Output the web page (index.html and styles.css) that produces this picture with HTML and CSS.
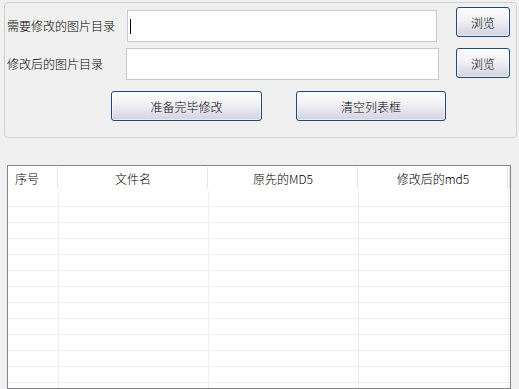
FILE: index.html
```html
<!DOCTYPE html>
<html lang="zh-CN">
<head>
    <meta charset="UTF-8">
    <meta name="viewport" content="width=device-width, initial-scale=1.0">
    <title>图片MD5修改</title>
    <link rel="stylesheet" href="styles.css">
</head>
<body>

<div class="group">
    <div class="row row-first">
        <div class="label">需要修改的图片目录</div>
        <div class="input"><span class="caret"></span></div>
        <button class="btn btn-browse">浏览</button>
    </div>
    <div class="row row-second">
        <div class="label label-short">修改后的图片目录</div>
        <div class="input input-wide"></div>
        <button class="btn btn-browse btn-browse2">浏览</button>
    </div>
    <div class="row row-actions">
        <button class="btn btn-action">准备完毕修改</button>
        <button class="btn btn-action btn-clear">清空列表框</button>
    </div>
</div>

<div class="list">
    <table class="list-table">
        <colgroup>
            <col style="width: 50px">
            <col style="width: 150px">
            <col style="width: 150px">
            <col style="width: 150px">
            <col>
        </colgroup>
        <thead>
            <tr>
                <th class="col-left">序号</th>
                <th>文件名</th>
                <th>原先的MD5</th>
                <th>修改后的md5</th>
                <th></th>
            </tr>
        </thead>
        <tbody id="rows"></tbody>
    </table>
</div>

<script>
    const rows = document.getElementById('rows');
    for (let i = 0; i < 13; i++) {
        const tr = document.createElement('tr');
        for (let j = 0; j < 5; j++) {
            tr.appendChild(document.createElement('td'));
        }
        rows.appendChild(tr);
    }
</script>

</body>
</html>
```

FILE: styles.css
```css
body {
    font-family: "Noto Sans CJK SC", "Liberation Sans", sans-serif;
    font-size: 12px;
    font-weight: 300;
    margin: 0;
    padding: 2px 0 0 4px;
    background-color: #f0f0f0;
    color: #000;
    overflow: hidden;
}

.group {
    box-sizing: border-box;
    width: 513px;
    height: 136px;
    border: 1px solid #d0d0d0;
    border-radius: 4px;
    padding: 0 0 0 2px;
}

.row {
    display: flex;
    align-items: flex-start;
}

.row-first {
    padding-top: 4px;
}

.row-second {
    margin-top: 6px;
}

.label {
    width: 120px;
    height: 32px;
    line-height: 32px;
    margin-top: 3px;
    white-space: nowrap;
}

.label-short {
    width: 119px;
    margin-top: 0;
}

.input {
    box-sizing: border-box;
    width: 310px;
    height: 32px;
    margin-top: 3px;
    border: 1px solid #c9c6d9;
    background-color: #fff;
    position: relative;
}

.input-wide {
    width: 313px;
    margin-top: 0;
}

.caret {
    position: absolute;
    left: 2px;
    top: 8px;
    width: 1px;
    height: 15px;
    background-color: #000;
}

.btn {
    box-sizing: border-box;
    font-family: inherit;
    font-size: 12px;
    font-weight: 300;
    color: #000;
    border: 1px solid #1d4a78;
    border-radius: 3px;
    background: linear-gradient(#fefefe, #f2f2f6 40%, #d3d3e1);
    box-shadow: inset 0 0 0 1px rgba(255, 255, 255, 0.5);
    padding: 0;
    height: 30px;
}

.btn-browse {
    width: 54px;
    margin-left: 19px;
}

.btn-browse2 {
    margin-left: 17px;
}

.row-actions {
    margin-top: 11px;
    padding-left: 104px;
}

.btn-action {
    width: 151px;
}

.btn-clear {
    width: 150px;
    margin-left: 34px;
}

.list {
    box-sizing: border-box;
    width: 504px;
    height: 224px;
    margin: 27px 0 0 3px;
    border: 1px solid #848590;
    background-color: #fff;
    overflow: hidden;
}

.list-table {
    width: 502px;
    table-layout: fixed;
    border-collapse: collapse;
}

.list-table th {
    height: 25px;
    padding: 0;
    font-weight: 300;
    text-align: center;
    background: linear-gradient(to right, #e6e6e6, #e6e6e6) no-repeat right 1px / 1px 22px;
    background-color: #fff;
}

.list-table th.col-left {
    text-align: left;
    padding-left: 7px;
}

.list-table td {
    height: 15px;
    padding: 0;
    border-bottom: 1px solid #efefef;
    border-right: 1px solid #efefef;
}

.list-table td:last-child {
    border-right: none;
}
```
